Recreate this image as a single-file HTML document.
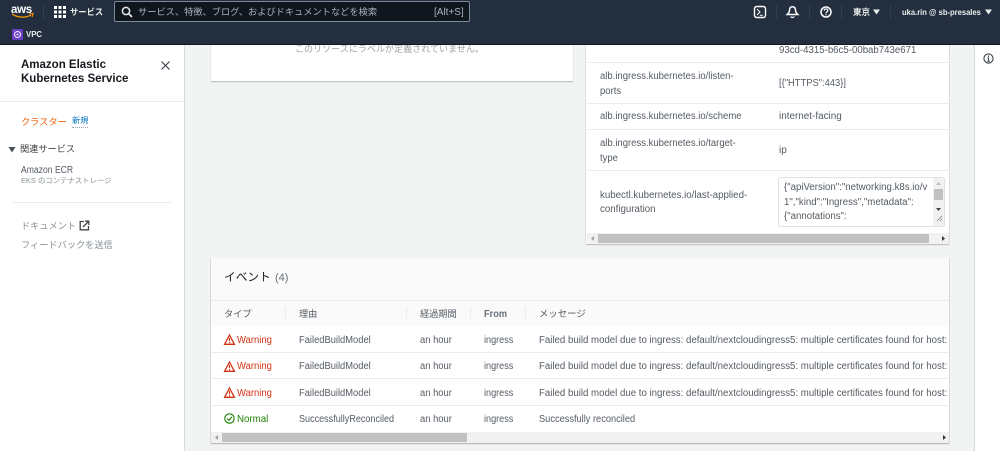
<!DOCTYPE html>
<html lang="ja"><head><meta charset="utf-8"><title>EKS</title>
<style>
html,body{margin:0;padding:0;width:1000px;height:451px;overflow:hidden;background:#f2f3f3}
body{position:relative;font-family:"Liberation Sans","Noto Sans CJK JP",sans-serif;font-size:10px;color:#545b64;filter:blur(.25px)}
.b{position:absolute;box-sizing:border-box}
.t{position:absolute;white-space:nowrap;line-height:14px;transform-origin:0 50%}
.c{font-size:9.200px}
.m{transform:scaleX(.965)}
.k{transform:scaleX(.95)}
.j{transform:scaleX(.97)}
.a{transform:scaleX(.965);color:#545b64}
.w{color:#d13212;transform:scaleX(.945)}
.f{transform:scaleX(.935)}
.h{transform:scaleX(.94)}
.i{transform:scaleX(.91)}
svg{position:absolute;overflow:visible}
.line{position:absolute;height:1px;background:#eaeded}
</style></head><body>

<!-- main cards -->
<div class="b" style="left:211px;top:40px;width:362px;height:41px;background:#fff;box-shadow:0 1px 1px #b5baba"></div>
<div class="t c" style="left:295px;top:42px;color:#9aa0a6;font-size:9.050px">このリソースにラベルが定義されていません。</div>

<div class="b" style="left:586px;top:40px;width:363px;height:204px;background:#fff;box-shadow:0 1px 1px #b5baba,-1px 0 0 #e4e6e6,1px 0 0 #e4e6e6"></div>
<div class="t m" style="left:779px;top:44px">93cd-4315-b6c5-00bab743e671</div>
<div class="line" style="left:587px;top:62px;width:362px"></div>
<div class="t k" style="left:600px;top:70px">alb.ingress.kubernetes.io/listen-</div>
<div class="t k" style="left:600px;top:85px">ports</div>
<div class="t" style="left:779px;top:77px;transform:scaleX(.935)">[{"HTTPS":443}]</div>
<div class="line" style="left:587px;top:103px;width:362px"></div>
<div class="t k" style="left:600px;top:110px">alb.ingress.kubernetes.io/scheme</div>
<div class="t" style="left:779px;top:110px;transform:scaleX(.99)">internet-facing</div>
<div class="line" style="left:587px;top:129px;width:362px"></div>
<div class="t k" style="left:600px;top:137px">alb.ingress.kubernetes.io/target-</div>
<div class="t k" style="left:600px;top:152px">type</div>
<div class="t" style="left:779px;top:144px">ip</div>
<div class="line" style="left:587px;top:170px;width:362px"></div>
<div class="t j" style="left:600px;top:189px">kubectl.kubernetes.io/last-applied-</div>
<div class="t j" style="left:600px;top:203px">configuration</div>
<div class="b" style="left:778px;top:177px;width:167px;height:50px;background:#fff;border:1px solid #dfe3e3;border-radius:2px"></div>
<div class="t a" style="left:784px;top:181px">{"apiVersion":"networking.k8s.io/v</div>
<div class="t a" style="left:784px;top:196px">1","kind":"Ingress","metadata":</div>
<div class="t a" style="left:784px;top:210px">{"annotations":</div>
<div class="b" style="left:933px;top:178px;width:11px;height:48px;background:#f1f1f1"></div>
<div class="b" style="left:934px;top:189px;width:9px;height:11px;background:#c1c1c1"></div>
<svg style="left:935px;top:181px" width="7" height="40" viewBox="0 0 7 40"><path d="M3.500 1 6 4H1z" fill="#c0c0c0"/><path d="M3.500 30 1 27h5z" fill="#444"/><path d="M2 40 7 35M5 40 7 38" stroke="#777" stroke-width=".7"/></svg>
<div class="b" style="left:587px;top:233px;width:362px;height:11px;background:#f1f1f1"></div>
<div class="b" style="left:598px;top:234px;width:331px;height:9px;background:#c1c1c1"></div>
<svg style="left:590px;top:235px" width="355" height="7" viewBox="0 0 355 7"><path d="M1 3.500 4 1v5z" fill="#a0a0a0"/><path d="M352 1l3 2.500-3 2.500z" fill="#333"/></svg>

<!-- events card -->
<div class="b" style="left:211px;top:258px;width:738px;height:185px;background:#fff;box-shadow:0 1px 1px #a9aeae,-1px 0 0 #e4e6e6,1px 0 0 #e4e6e6"></div>
<div class="b" style="left:211px;top:258px;width:738px;height:68px;background:#fafafa"></div>
<div class="line" style="left:211px;top:300px;width:738px"></div>
<div class="t" style="left:224px;top:269px;font-size:11.700px;line-height:18px;color:#16191f">イベント</div>
<div class="t" style="left:275px;top:269px;font-size:11px;line-height:18px;color:#687078">(4)</div>
<div class="t c" style="left:224px;top:307px">タイプ</div>
<div class="t c" style="left:299px;top:307px">理由</div>
<div class="t c" style="left:420px;top:307px">経過期間</div>
<div class="t" style="left:484px;top:308px;font-weight:bold;color:#687078;transform:scaleX(.92)">From</div>
<div class="t c" style="left:539px;top:307px;font-size:9.400px">メッセージ</div>
<div class="b" style="left:285px;top:307px;width:1px;height:12px;background:#eaeded"></div>
<div class="b" style="left:406px;top:307px;width:1px;height:12px;background:#eaeded"></div>
<div class="b" style="left:470px;top:307px;width:1px;height:12px;background:#eaeded"></div>
<div class="b" style="left:525px;top:307px;width:1px;height:12px;background:#eaeded"></div>
<div class="line" style="left:211px;top:352px;width:738px"></div>
<div class="line" style="left:211px;top:378px;width:738px"></div>
<div class="line" style="left:211px;top:405px;width:738px"></div>

<svg style="left:224px;top:334px" width="11" height="11" viewBox="0 0 11 11"><path d="M5.500 1 10.400 10.300H.6z" fill="none" stroke="#d13212" stroke-width="1.300"/><path d="M5.500 4v3.300M5.500 8v1.200" stroke="#d13212" stroke-width="1.100"/></svg>
<div class="t w" style="left:237px;top:334px">Warning</div>
<div class="t f" style="left:299px;top:334px">FailedBuildModel</div>
<div class="t h" style="left:420px;top:334px">an hour</div>
<div class="t i" style="left:484px;top:334px">ingress</div>
<div class="t m" style="left:539px;top:334px">Failed build model due to ingress: default/nextcloudingress5: multiple certificates found for host:</div>

<svg style="left:224px;top:361px" width="11" height="11" viewBox="0 0 11 11"><path d="M5.500 1 10.400 10.300H.6z" fill="none" stroke="#d13212" stroke-width="1.300"/><path d="M5.500 4v3.300M5.500 8v1.200" stroke="#d13212" stroke-width="1.100"/></svg>
<div class="t w" style="left:237px;top:360px">Warning</div>
<div class="t f" style="left:299px;top:360px">FailedBuildModel</div>
<div class="t h" style="left:420px;top:360px">an hour</div>
<div class="t i" style="left:484px;top:360px">ingress</div>
<div class="t m" style="left:539px;top:360px">Failed build model due to ingress: default/nextcloudingress5: multiple certificates found for host:</div>

<svg style="left:224px;top:387px" width="11" height="11" viewBox="0 0 11 11"><path d="M5.500 1 10.400 10.300H.6z" fill="none" stroke="#d13212" stroke-width="1.300"/><path d="M5.500 4v3.300M5.500 8v1.200" stroke="#d13212" stroke-width="1.100"/></svg>
<div class="t w" style="left:237px;top:387px">Warning</div>
<div class="t f" style="left:299px;top:387px">FailedBuildModel</div>
<div class="t h" style="left:420px;top:387px">an hour</div>
<div class="t i" style="left:484px;top:387px">ingress</div>
<div class="t m" style="left:539px;top:387px">Failed build model due to ingress: default/nextcloudingress5: multiple certificates found for host:</div>

<svg style="left:224px;top:413px" width="11" height="11" viewBox="0 0 11 11"><circle cx="5.500" cy="5.500" r="4.700" fill="none" stroke="#1d8102" stroke-width="1.100"/><path d="M3.200 5.600 5 7.300 7.900 3.900" fill="none" stroke="#1d8102" stroke-width="1.100"/></svg>
<div class="t" style="left:237px;top:413px;color:#1d8102;transform:scaleX(.97)">Normal</div>
<div class="t" style="left:299px;top:413px;transform:scaleX(.905)">SuccessfullyReconciled</div>
<div class="t h" style="left:420px;top:413px">an hour</div>
<div class="t i" style="left:484px;top:413px">ingress</div>
<div class="t" style="left:539px;top:413px;transform:scaleX(.925)">Successfully reconciled</div>

<div class="b" style="left:211px;top:432px;width:738px;height:11px;background:#f1f1f1"></div>
<div class="b" style="left:222px;top:433px;width:245px;height:9px;background:#c1c1c1"></div>
<svg style="left:214px;top:434px" width="732" height="7" viewBox="0 0 732 7"><path d="M1 3.500 4 1v5z" fill="#a0a0a0"/><path d="M729 1l3 2.500-3 2.500z" fill="#333"/></svg>

<!-- sidebar -->
<div class="b" style="left:0;top:44px;width:185px;height:407px;background:#fff;border-right:1px solid #d5dbdb"></div>
<div class="t" style="left:21px;top:58px;font-size:11.500px;line-height:15px;font-weight:bold;color:#16191f">Amazon Elastic</div>
<div class="t" style="left:21px;top:72px;font-size:11.500px;line-height:15px;font-weight:bold;color:#16191f">Kubernetes Service</div>
<svg style="left:160px;top:60px" width="11" height="11" viewBox="0 0 11 11"><path d="M1.500 1.500l8 8M9.500 1.500l-8 8" stroke="#3a4149" stroke-width="1.200"/></svg>
<div class="line" style="left:0;top:101px;width:184px"></div>
<div class="t c" style="left:21px;top:115px;color:#eb5f07">クラスター</div>
<div class="t" style="left:72px;top:115px;font-size:8.200px;color:#0073bb;border-bottom:1px dotted #98a0a8;line-height:12px">新規</div>
<svg style="left:8px;top:146px" width="8" height="7" viewBox="0 0 8 7"><path d="M.5 1h7L4 6.500z" fill="#4a5058"/></svg>
<div class="t c" style="left:20px;top:142px;color:#444">関連サービス</div>
<div class="t" style="left:21px;top:164px;transform:scaleX(.86)">Amazon ECR</div>
<div class="t" style="left:21px;top:174px;font-size:7.400px;color:#879196">EKS のコンテナストレージ</div>
<div class="line" style="left:13px;top:202px;width:158px"></div>
<div class="t c" style="left:21px;top:219px;color:#879196">ドキュメント</div>
<svg style="left:79px;top:220px" width="11" height="11" viewBox="0 0 11 11"><path d="M5 1.500H1.200v8.300h8.300V6" fill="none" stroke="#444" stroke-width="1.300"/><path d="M4 7l5-5M6 1.200h3.800V5" fill="none" stroke="#444" stroke-width="1.300"/></svg>
<div class="t c" style="left:21px;top:238px;color:#879196">フィードバックを送信</div>

<!-- right rail -->
<div class="b" style="left:974px;top:44px;width:26px;height:407px;background:#fff;border-left:1px solid #d5dbdb"></div>
<svg style="left:983px;top:53px" width="11" height="11" viewBox="0 0 11 11"><circle cx="5.500" cy="5.500" r="4.600" fill="none" stroke="#3a4149" stroke-width="1.100"/><path d="M5.500 2.500v1.300M4.300 5h1.300v3.200M4.200 8.300h2.700" fill="none" stroke="#3a4149"/></svg>

<!-- top nav -->
<div class="b" style="left:0;top:0;width:1000px;height:45px;background:#232f3e;border-bottom:1px solid #12181f"></div>
<div class="t" style="left:11px;top:3px;font-size:11.500px;font-weight:bold;color:#fff;letter-spacing:-.3px">aws</div>
<svg style="left:11px;top:13px" width="23" height="6" viewBox="0 0 23 6"><path d="M1 1c6 4 14 4 19 1" fill="none" stroke="#ff9900" stroke-width="1.300"/><path d="M18.500.8 22 .5 21 4" fill="none" stroke="#ff9900" stroke-width="1.100"/></svg>
<div class="b" style="left:43px;top:4px;width:1px;height:15px;background:#333f4e"></div>
<svg style="left:54px;top:6px" width="12" height="12" viewBox="0 0 12 12" fill="#fff"><rect width="3" height="3"/><rect x="4.500" width="3" height="3"/><rect x="9" width="3" height="3"/><rect y="4.500" width="3" height="3"/><rect x="4.500" y="4.500" width="3" height="3"/><rect x="9" y="4.500" width="3" height="3"/><rect y="9" width="3" height="3"/><rect x="4.500" y="9" width="3" height="3"/><rect x="9" y="9" width="3" height="3"/></svg>
<div class="t" style="left:70px;top:5px;color:#eaeded;font-size:8.300px;font-weight:bold">サービス</div>
<div class="b" style="left:114px;top:1px;width:356px;height:21px;background:#10161e;border:1px solid #7d8998;border-radius:2px"></div>
<svg style="left:121px;top:6px" width="12" height="12" viewBox="0 0 12 12"><circle cx="5" cy="5" r="3.600" fill="none" stroke="#e6e8ea" stroke-width="1.500"/><path d="M7.700 7.700 11 11" stroke="#e6e8ea" stroke-width="1.700"/></svg>
<div class="t" style="left:138px;top:5px;color:#aab2ba;font-size:9.230px">サービス、特徴、ブログ、およびドキュメントなどを検索</div>
<div class="t" style="left:434px;top:6px;color:#aab2ba">[Alt+S]</div>

<svg style="left:753px;top:5px" width="14" height="14" viewBox="0 0 14 14"><rect x="1.500" y="1.500" width="11" height="11" rx="2" fill="none" stroke="#fff" stroke-width="1.400"/><path d="M4 4l3 3-3 3M6.800 10.200h3" fill="none" stroke="#fff" stroke-width="1"/></svg>
<div class="b" style="left:776px;top:5px;width:1px;height:14px;background:#333f4e"></div>
<svg style="left:786px;top:5px" width="13" height="14" viewBox="0 0 13 14"><path d="M6.500 1.700c-2.200 0-3 1.800-3 3.500 0 2-1 3-2.300 4.300h10.600C10.500 8.200 9.500 7.200 9.500 5.200c0-1.700-.8-3.500-3-3.500z" fill="none" stroke="#fff" stroke-width="1.500"/><path d="M4.800 11.500c.5 1.300 3 1.300 3.400 0" fill="none" stroke="#fff" stroke-width="1.200"/></svg>
<div class="b" style="left:809px;top:5px;width:1px;height:14px;background:#333f4e"></div>
<svg style="left:819px;top:5px" width="14" height="14" viewBox="0 0 14 14"><circle cx="7" cy="7" r="5" fill="none" stroke="#fff" stroke-width="1.500"/><path d="M5.200 5.600c0-2.200 3.600-2.200 3.600 0 0 1.300-1.800 1.300-1.800 2.600" fill="none" stroke="#fff" stroke-width="1.200"/><path d="M7 9v1.200" stroke="#fff" stroke-width="1.200"/></svg>
<div class="b" style="left:841px;top:5px;width:1px;height:14px;background:#333f4e"></div>
<div class="t" style="left:853px;top:5px;font-size:8.500px;color:#eaeded;font-weight:bold">東京</div>
<svg style="left:873px;top:9px" width="7" height="6" viewBox="0 0 7 6"><path d="M0 .5h7L3.500 5.500z" fill="#eaeded"/></svg>
<div class="b" style="left:890px;top:5px;width:1px;height:14px;background:#333f4e"></div>
<div class="t" style="left:902px;top:5px;font-size:8.500px;color:#eaeded;font-weight:bold;transform:scaleX(.895)">uka.rin @ sb-presales</div>
<svg style="left:985px;top:9px" width="7" height="6" viewBox="0 0 7 6"><path d="M0 .5h7L3.500 5.500z" fill="#eaeded"/></svg>

<div class="b" style="left:12px;top:29px;width:11px;height:11px;background:#6a3fc2;border-radius:1px"></div>
<svg style="left:13px;top:30px" width="9" height="9" viewBox="0 0 9 9"><circle cx="4.500" cy="4.500" r="3" fill="none" stroke="#e6dcf8" stroke-width="1.200"/><circle cx="4.500" cy="4.500" r="1" fill="#e6dcf8"/></svg>
<div class="t" style="left:26px;top:28px;font-size:7.800px;font-weight:bold;color:#eaeded">VPC</div>
</body></html>
